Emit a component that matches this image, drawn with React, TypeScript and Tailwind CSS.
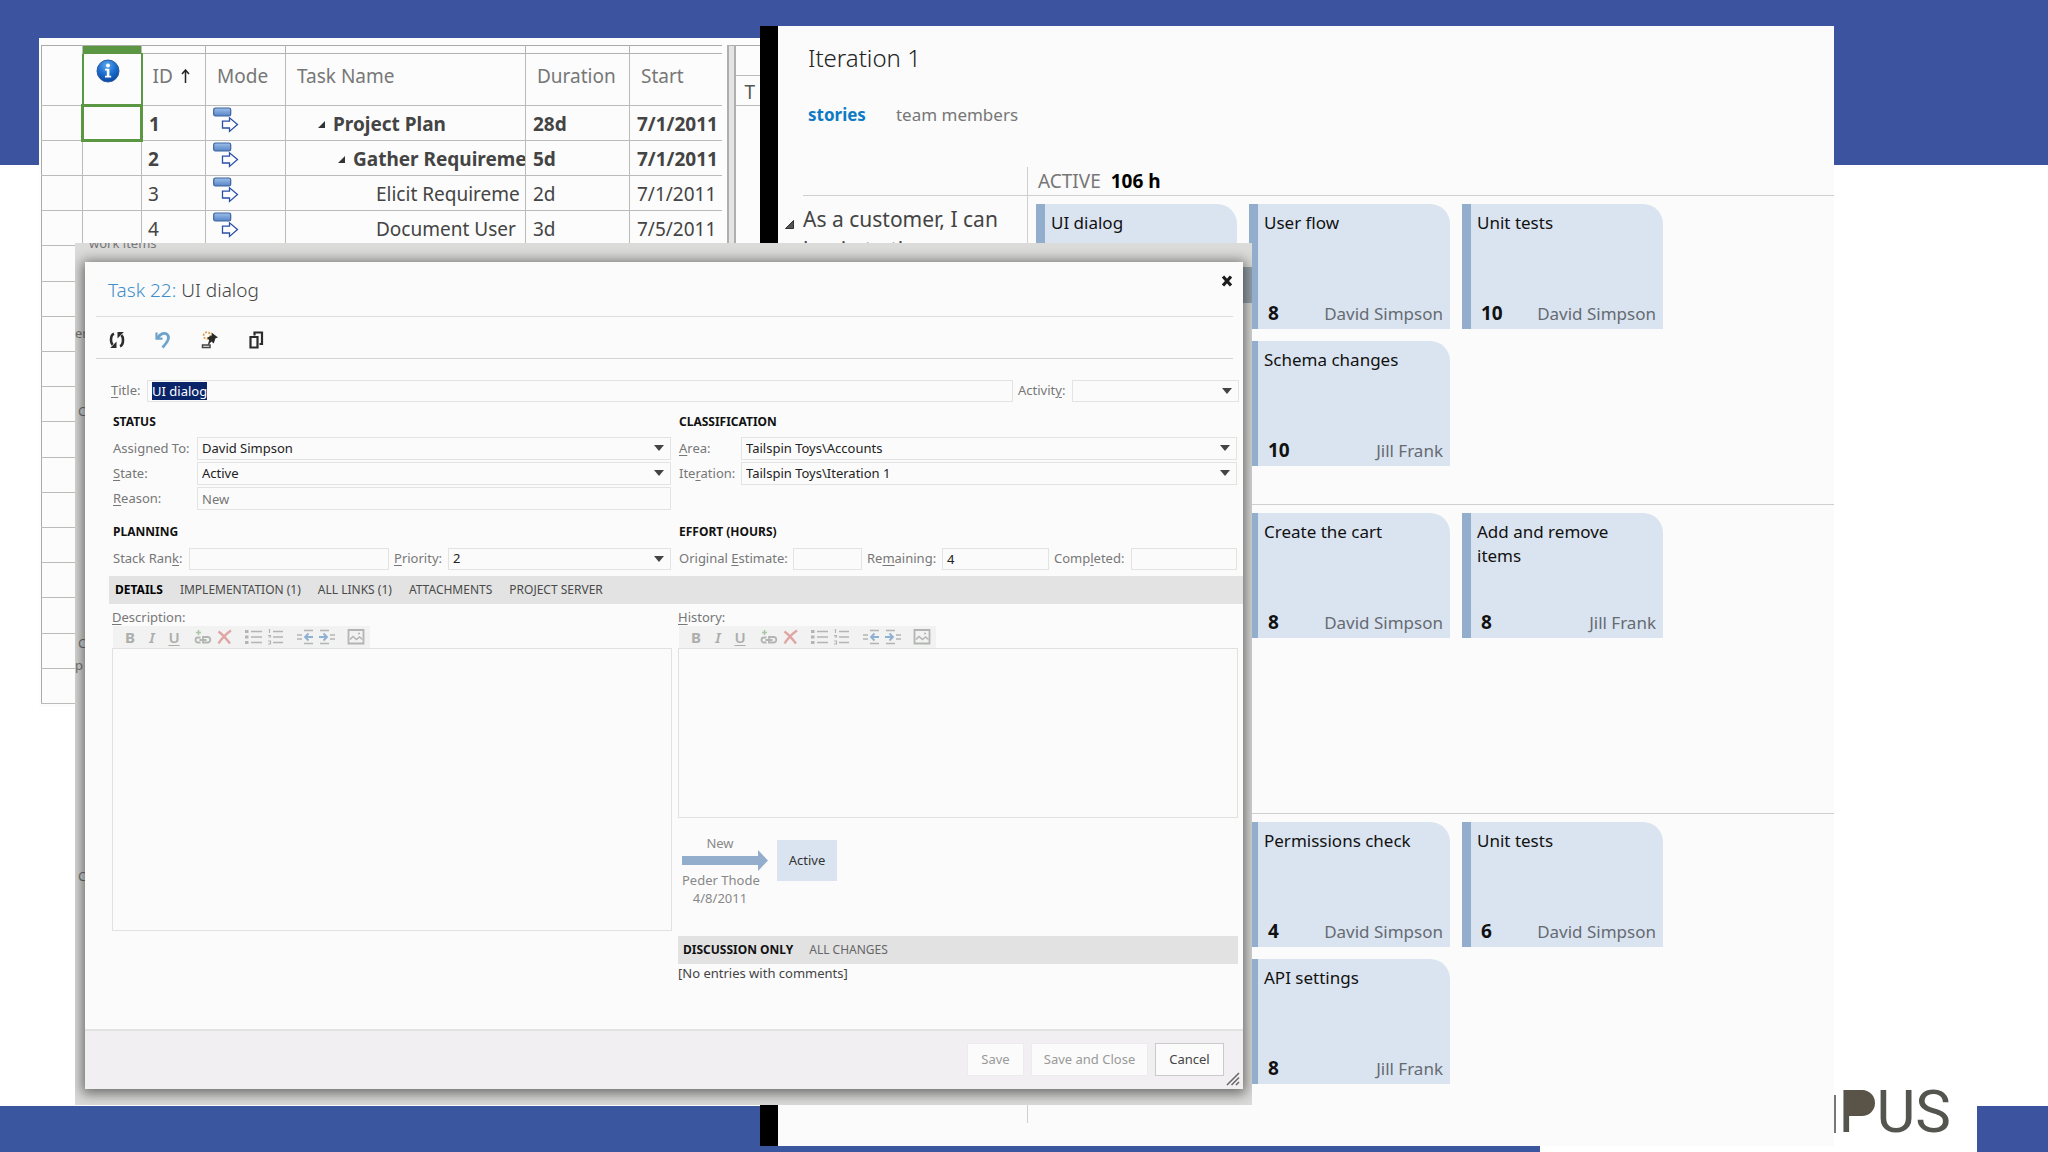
import React, { useEffect, useId, useRef } from "react";

type LabelParts = [string, string, string];

const planRows = [
  { id: "1", name: "Project Plan", duration: "28d", start: "7/1/2011", level: 0 },
  { id: "2", name: "Gather Requireme", duration: "5d", start: "7/1/2011", level: 1 },
  { id: "3", name: "Elicit Requireme", duration: "2d", start: "7/1/2011", level: 2 },
  { id: "4", name: "Document User", duration: "3d", start: "7/5/2011", level: 2 },
];
const blankRows = Array.from({ length: 13 }, (_, i) => i);
const indents = ["pl-6", "pl-11", "pl-[90px]"];

function InfoIcon() {
  return (
    <svg width="24" height="24" viewBox="0 0 24 24" className="ml-3" role="img" aria-label="Indicators">
      <defs>
        <radialGradient id="info-fill" cx="0.45" cy="0.25" r="0.8">
          <stop offset="0" stopColor="#5fa8ec" />
          <stop offset="0.5" stopColor="#1c6fd0" />
          <stop offset="1" stopColor="#0a4296" />
        </radialGradient>
      </defs>
      <circle cx="12" cy="12" r="11" fill="url(#info-fill)" stroke="#2c5fa5" strokeWidth="1" />
      <circle cx="12" cy="6.4" r="2" fill="#fff" />
      <path d="M9 9.8h4.4v7h1.8v1.7H9v-1.7h1.8v-5.3H9z" fill="#fff" />
    </svg>
  );
}

function ModeIcon() {
  return (
    <svg width="26" height="27" viewBox="0 0 26 27" aria-hidden="true">
      <defs>
        <linearGradient id="mode-fill" x1="0" y1="0" x2="0" y2="1">
          <stop offset="0" stopColor="#9fc0ea" />
          <stop offset="1" stopColor="#5584c6" />
        </linearGradient>
      </defs>
      <rect x="0.7" y="1" width="17" height="8" rx="1.8" fill="url(#mode-fill)" stroke="#3f62a0" strokeWidth="1.2" />
      <path d="M9.5 14.2h7v-3.4l8 6.8-8 6.8V21h-7z" fill="#fff" stroke="#2a4fa8" strokeWidth="1.3" />
    </svg>
  );
}

function OutlineArrow() {
  return (
    <svg width="7" height="7" viewBox="0 0 7 7" aria-hidden="true">
      <path d="M7 0v7H0z" fill="#333" />
    </svg>
  );
}

function ProjectWindow() {
  return (
    <section className="absolute top-[38px] left-[39px] flex h-[669px] w-[721px] overflow-hidden bg-[#fbfcfb] pt-[7px] pl-[2px]">
      <table className="w-[680px] shrink-0 table-fixed border-collapse self-start border-t border-l border-[#a9aba9] text-[19px] text-[#444]">
        <colgroup>
          <col className="w-[41px]" />
          <col className="w-[59px]" />
          <col className="w-[64px]" />
          <col className="w-[80px]" />
          <col className="w-[240px]" />
          <col className="w-[104px]" />
          <col className="w-[92px]" />
        </colgroup>
        <thead>
          <tr className="h-[8px]">
            <td className="border-r border-[#b9bcb9]" />
            <td className="border-r border-[#b9bcb9] bg-[#5b9743]" />
            {[0, 1, 2, 3].map((n) => (
              <td key={n} className="border-r border-b border-[#b0b3b0]" />
            ))}
            <td className="border-b border-[#b0b3b0]" />
          </tr>
          <tr className="h-[52px] text-left leading-7 text-[#777]">
            <th className="border-r border-b border-[#b9bcb9]" />
            <th className="border-r-2 border-b border-l-2 border-[#5b9743] pb-4">
              <InfoIcon />
            </th>
            <th className="border-r border-b border-[#b9bcb9] pb-2 pl-[10px] font-normal">
              <span className="flex items-center gap-2">
                ID
                <svg width="9" height="14" viewBox="0 0 9 14" aria-hidden="true">
                  <path d="M4.500 14V1.500M1 5l3.500-4L8 5" fill="none" stroke="#222" strokeWidth="1.500" />
                </svg>
              </span>
            </th>
            <th className="border-r border-b border-[#b9bcb9] pb-2 pl-[11px] font-normal">Mode</th>
            <th className="border-r border-b border-[#b9bcb9] pb-2 pl-[11px] font-normal">Task Name</th>
            <th className="border-r border-b border-[#b9bcb9] pb-2 pl-[11px] font-normal">Duration</th>
            <th className="border-b border-[#b9bcb9] pb-2 pl-[11px] font-normal">Start</th>
          </tr>
        </thead>
        <tbody>
          {planRows.map((row, i) => (
            <tr key={row.id} className={row.level < 2 ? "h-[35px] leading-7 font-bold" : "h-[35px] leading-7"}>
              <td className="border-r border-b border-[#b9bcb9]" />
              <td className={i === 0 ? "border-3 border-[#5b9743]" : "border-r border-b border-[#b9bcb9]"} />
              <td className="border-r border-b border-[#b9bcb9] pt-[2px] pl-[6px]">{row.id}</td>
              <td className="border-r border-b border-[#b9bcb9] pb-[5px] pl-[7px]">
                <ModeIcon />
              </td>
              <td className="overflow-hidden border-r border-b border-[#b9bcb9] pt-[2px] whitespace-nowrap">
                <span className={`flex items-center gap-2 leading-7 ${indents[row.level]}`}>
                  {row.level < 2 && (
                    <span className="ml-2">
                      <OutlineArrow />
                    </span>
                  )}
                  {row.name}
                </span>
              </td>
              <td className="border-r border-b border-[#b9bcb9] pt-[2px] pl-[7px]">{row.duration}</td>
              <td className="border-b border-[#b9bcb9] pt-[2px] pl-[7px] whitespace-nowrap">{row.start}</td>
            </tr>
          ))}
          {blankRows.map((n) => (
            <tr key={n} className={n % 5 === 0 ? "h-9" : "h-[35px]"}>
              <td className="border-r border-b border-[#b9bcb9]" />
              <td className="border-b border-[#b9bcb9]" colSpan={6} />
            </tr>
          ))}
        </tbody>
      </table>
      <div className="ml-[5px] w-[9px] shrink-0 border-x-2 border-t border-[#aeb0ae] bg-[#e3e4e3]" />
      <div className="grow border-t border-[#a9aba9]">
        <div className="h-[30px] border-b border-[#b9bcb9]" />
        <div className="flex h-[30px] items-center border-b border-[#b9bcb9] pt-[3px] pl-[9px] text-[19px] text-[#555]">T</div>
      </div>
    </section>
  );
}

interface Card {
  title: string;
  hours: number;
  owner: string;
  place: string;
}

const stories: { text: string; cards: Card[] }[] = [
  {
    text: "As a customer, I can begin to the",
    cards: [
      { title: "UI dialog", hours: 4, owner: "David Simpson", place: "col-start-1 row-start-1" },
      { title: "User flow", hours: 8, owner: "David Simpson", place: "col-start-2 row-start-1" },
      { title: "Unit tests", hours: 10, owner: "David Simpson", place: "col-start-3 row-start-1" },
      { title: "Schema changes", hours: 10, owner: "Jill Frank", place: "col-start-2 row-start-2" },
    ],
  },
  {
    text: "",
    cards: [
      { title: "Create the cart", hours: 8, owner: "David Simpson", place: "col-start-2 row-start-1" },
      { title: "Add and remove items", hours: 8, owner: "Jill Frank", place: "col-start-3 row-start-1" },
    ],
  },
  {
    text: "",
    cards: [
      { title: "Permissions check", hours: 4, owner: "David Simpson", place: "col-start-2 row-start-1" },
      { title: "Unit tests", hours: 6, owner: "David Simpson", place: "col-start-3 row-start-1" },
      { title: "API settings", hours: 8, owner: "Jill Frank", place: "col-start-2 row-start-2" },
    ],
  },
];

function TaskCard({ card }: { card: Card }) {
  return (
    <article
      className={`flex h-[125px] flex-col justify-between rounded-tr-[20px] border-l-9 border-[#93aecd] bg-[#dae4f0] pt-[7px] pr-[7px] pb-[3px] pl-[6px] text-[17px] leading-6 text-[#111] ${card.place}`}
    >
      <h3 className="max-w-[150px]">{card.title}</h3>
      <div className="flex items-baseline justify-between pl-1">
        <strong className="text-[19px] leading-6">{card.hours}</strong>
        <span className="text-[#666b72]">{card.owner}</span>
      </div>
    </article>
  );
}

function IterationWindow() {
  return (
    <section className="absolute top-[26px] right-[214px] bottom-[6px] left-[760px] flex flex-col border-l-18 border-black bg-[#fafbfa]">
      <h1 className="mt-4 ml-[30px] text-2xl leading-8 font-light text-[#222]">Iteration 1</h1>
      <nav className="mt-[29px] ml-[30px] flex h-[25px] gap-[30px] text-[17px] leading-6">
        <a href="#stories" className="font-bold text-[#0e7ac6]">stories</a>
        <a href="#members" className="text-[#777]">team members</a>
      </nav>
      <div className="mt-[39px] flex h-[29px] pl-[25px]">
        <div className="w-[225px] border-r border-b border-[#cfcfcf]" />
        <div className="flex grow items-baseline gap-[10px] border-b border-[#cfcfcf] pl-[10px] text-[19px] leading-7 text-[#777]">
          ACTIVE <strong className="text-black">106 h</strong>
        </div>
      </div>
      {stories.map((story, i) => (
        <div key={i} className="flex h-[309px] pl-[7px]">
          <div className="flex w-[18px] items-start pt-[24px]">
            {story.text && (
              <svg width="9" height="9" viewBox="0 0 10 10" aria-hidden="true">
                <path d="M9.500.5v9H.5z" fill="#555" stroke="#222" />
              </svg>
            )}
          </div>
          <div className={`w-[225px] border-r border-[#cfcfcf] pt-2 pr-3 text-[21px] leading-[30px] text-[#444] ${i < 2 ? "border-b" : ""}`}>
            {story.text}
          </div>
          <div
            className={`grid grow auto-rows-min grid-cols-[repeat(auto-fill,201px)] gap-3 border-[#cfcfcf] pt-2 pl-2 ${i < 2 ? "border-b" : ""}`}
          >
            {story.cards.map((card) => (
              <TaskCard key={card.title} card={card} />
            ))}
          </div>
        </div>
      ))}
    </section>
  );
}

function AccessLabel({ parts, htmlFor, className = "" }: { parts: LabelParts; htmlFor?: string; className?: string }) {
  return (
    <label htmlFor={htmlFor} className={`shrink-0 whitespace-nowrap text-[#777] ${className}`}>
      {parts[0]}
      <span className="underline underline-offset-2">{parts[1]}</span>
      {parts[2]}
    </label>
  );
}

const boxClass = "h-full w-full border border-[#e2e4e2] bg-[#fbfbfb] px-1 text-[13px] outline-none";

interface FieldProps {
  parts: LabelParts;
  value?: string;
  labelClass?: string;
  boxWrap?: string;
  muted?: boolean;
}

function TextField({ parts, value = "", labelClass, boxWrap = "flex-1", muted }: FieldProps) {
  const id = useId();
  return (
    <>
      <AccessLabel parts={parts} htmlFor={id} className={labelClass} />
      <div className={`h-full min-w-0 ${boxWrap}`}>
        <input id={id} type="text" defaultValue={value} className={`${boxClass} ${muted ? "text-[#777]" : "text-[#222]"}`} />
      </div>
    </>
  );
}

function SelectField({ parts, value = "", labelClass, boxWrap = "flex-1" }: FieldProps) {
  const id = useId();
  return (
    <>
      <AccessLabel parts={parts} htmlFor={id} className={labelClass} />
      <div className={`relative h-full min-w-0 ${boxWrap}`}>
        <select id={id} defaultValue={value} className={`${boxClass} appearance-none text-[#222]`}>
          <option>{value}</option>
        </select>
        <svg width="10" height="6" viewBox="0 0 10 6" className="pointer-events-none absolute top-2 right-[7px]" aria-hidden="true">
          <path d="M0 0h10L5 6z" fill="#444" />
        </svg>
      </div>
    </>
  );
}

function RefreshIcon() {
  return (
    <svg width="16" height="18" viewBox="0 0 16 18" aria-hidden="true">
      <g fill="none" stroke="#2b2b2b" strokeWidth="2.600">
        <path d="M5 2.800C3 3.500 2 5.500 2 9c0 2.200.6 3.800 1.600 4.800" />
        <path d="M11 15.200c2-.7 3-2.700 3-6.200 0-2.200-.6-3.800-1.600-4.800" />
      </g>
      <path d="M7.500 10.500v6.500H1.200z M8.500 7.500V1h6.300z" fill="#2b2b2b" />
    </svg>
  );
}

function UndoIcon() {
  return (
    <svg width="16" height="18" viewBox="0 0 16 18" aria-hidden="true">
      <path d="M2.500 7C5.500 2.500 9.500 1.200 12 3.300c3.200 2.800 1.200 7-4.500 13.200" fill="none" stroke="#6da3cc" strokeWidth="2.800" />
      <path d="M1.500 1.500v6.200h6" fill="none" stroke="#6da3cc" strokeWidth="2.200" />
    </svg>
  );
}

function PinIcon() {
  return (
    <svg width="18" height="18" viewBox="0 0 18 18" aria-hidden="true">
      <circle cx="6" cy="4.500" r="3.400" fill="none" stroke="#e0a04a" strokeWidth="1.800" strokeDasharray="2 1.400" />
      <path d="M10.500 1.500l6.500 5-2.500.8-1.800 5.200-2.300-1.900-3.900 4.400 1.700-5.900-2.200-2.400 4.700-2.200z" fill="#2b2b2b" />
      <path d="M1.500 16.500v-2.500h7.500v2.500z" fill="none" stroke="#444" strokeWidth="1.500" />
    </svg>
  );
}

function CopyIcon() {
  return (
    <svg width="16" height="18" viewBox="0 0 16 18" aria-hidden="true">
      <g fill="none" stroke="#2b2b2b" strokeWidth="2.200">
        <path d="M1.500 6h7v10.500h-7z" />
        <path d="M5.500 4.500v-3H13v11.500h-2.500" />
      </g>
    </svg>
  );
}

function EditorIcon({ children }: { children: React.ReactNode }) {
  return (
    <svg width="18" height="16" viewBox="0 0 18 16" fill="none" stroke="#b3b5b3" strokeWidth="1.500" aria-hidden="true">
      {children}
    </svg>
  );
}

const editorGroups: { name: string; icon: React.ReactNode }[][] = [
  [
    { name: "Bold", icon: <b>B</b> },
    { name: "Italic", icon: <i className="font-semibold">I</i> },
    { name: "Underline", icon: <span className="font-semibold underline underline-offset-2">U</span> },
  ],
  [
    {
      name: "Insert link",
      icon: (
        <EditorIcon>
          <path d="M4.500 1v5M2 3.500h5" stroke="#a9c7a4" />
          <path d="M6.500 13.500H4a2.300 2.300 0 0 1 0-5h2.500M9 8h5a2.800 2.800 0 0 1 0 5.500H9zM5.500 11h7" strokeWidth="1.800" />
        </EditorIcon>
      ),
    },
    {
      name: "Remove link",
      icon: (
        <EditorIcon>
          <path d="M2.500 2.500c4 3 8 7.500 11.500 12M15 1.500C10.500 4.500 6 9 2.500 14.500" stroke="#dfa5a3" strokeWidth="2.300" />
        </EditorIcon>
      ),
    },
  ],
  [
    {
      name: "Bulleted list",
      icon: (
        <EditorIcon>
          <path d="M0 2.500h3.500M0 8h3.500M0 13.500h3.500" strokeWidth="3" />
          <path d="M6 2.500h11M6 8h11M6 13.500h11" />
        </EditorIcon>
      ),
    },
    {
      name: "Numbered list",
      icon: (
        <EditorIcon>
          <path d="M2.500 0v4M1 6.500h2.500v1.500H1.500M1 12h2.500v3H1" strokeWidth="1.200" />
          <path d="M6 2.500h10M6 8h10M6 13.500h10" />
        </EditorIcon>
      ),
    },
  ],
  [
    {
      name: "Outdent",
      icon: (
        <EditorIcon>
          <path d="M8 1.500h9M8 14.500h9M1 6h5M1 10h5" />
          <path d="M17 8H9M12.500 4.500L9 8l3.500 3.500" stroke="#8eb0d2" strokeWidth="1.800" />
        </EditorIcon>
      ),
    },
    {
      name: "Indent",
      icon: (
        <EditorIcon>
          <path d="M2 1.500h9M2 14.500h9M12 6h5M12 10h5" />
          <path d="M1 8h8M5.500 4.500L9 8l-3.500 3.500" stroke="#8eb0d2" strokeWidth="1.800" />
        </EditorIcon>
      ),
    },
  ],
  [
    {
      name: "Insert image",
      icon: (
        <EditorIcon>
          <path d="M1.500 1h15v13.500h-15z" strokeWidth="1.800" />
          <path d="M3 10.500l3-3 3.500 3 3-2.500 3 2.500" />
          <path d="M11 4.500h2" />
        </EditorIcon>
      ),
    },
  ],
];

function RichEditor({ parts, height }: { parts: LabelParts; height: string }) {
  const id = useId();
  return (
    <div className="flex flex-col">
      <AccessLabel parts={parts} htmlFor={id} className="h-[22px] pt-[3px] leading-5" />
      <div className="ml-px flex h-[22px] w-[257px] items-center gap-[7px] bg-[#f1f2f1] pl-[6px] text-[#acaeac]">
        {editorGroups.map((group, i) => (
          <div key={i} className="flex">
            {group.map((tool) => (
              <button key={tool.name} type="button" aria-label={tool.name} className="flex h-[22px] w-[22px] items-center justify-center text-[15px]">
                {tool.icon}
              </button>
            ))}
          </div>
        ))}
      </div>
      <textarea id={id} className={`w-full resize-none border border-[#e0e2e0] bg-[#fbfbfb] outline-none ${height}`} />
    </div>
  );
}

const tabs = ["DETAILS", "IMPLEMENTATION (1)", "ALL LINKS (1)", "ATTACHMENTS", "PROJECT SERVER"];
const headingClass = "text-xs leading-5 font-bold text-[#111]";

function TaskDialog() {
  const titleRef = useRef<HTMLInputElement>(null);
  const titleId = useId();
  useEffect(() => {
    titleRef.current?.focus();
    titleRef.current?.select();
  }, []);
  return (
    <div role="dialog" aria-label="Task 22: UI dialog" className="relative flex grow flex-col bg-[#fbfbfb] text-[13px] shadow-[0_2px_12px_3px_rgba(0,0,0,0.5)]">
      <header className="mr-[10px] ml-[11px] flex h-[55px] justify-between border-b border-[#dcdedc] pl-3">
        <h2 className="pt-[14px] text-[19px] leading-7 font-light text-[#444]">
          <span className="text-[#3d8ecb]">Task 22:</span> UI dialog
        </h2>
        <button type="button" aria-label="Close" className="h-8 w-3 pt-[6px]">
          <svg width="12" height="12" viewBox="0 0 12 12" aria-hidden="true">
            <path d="M2 1.500l8 9M10 1.500l-8 9" stroke="#1c1c1c" strokeWidth="3.200" />
          </svg>
        </button>
      </header>
      <div className="mr-[10px] ml-[11px] flex h-[42px] items-center gap-[30px] border-b border-[#d3d5d3] pt-1 pl-[13px]">
        <button type="button" aria-label="Refresh"><RefreshIcon /></button>
        <button type="button" aria-label="Undo"><UndoIcon /></button>
        <button type="button" aria-label="Pin"><PinIcon /></button>
        <button type="button" aria-label="Copy"><CopyIcon /></button>
      </div>

      <form className="flex grow flex-col" onSubmit={(e) => e.preventDefault()}>
        <div className="mt-[21px] flex h-[22px] items-center pr-1 pl-[26px]">
          <AccessLabel parts={["", "T", "itle:"]} htmlFor={titleId} className="w-9" />
          <input
            id={titleId}
            ref={titleRef}
            type="text"
            defaultValue="UI dialog"
            className={`${boxClass} min-w-0 flex-1 selection:bg-[#0a246a] selection:text-white`}
          />
          <SelectField parts={["Activit", "y", ":"]} labelClass="ml-[5px] w-[54px]" boxWrap="w-[167px]" />
        </div>

        <div className="grid grid-cols-2 gap-[6px] pr-[5px] pl-[27px]">
          <fieldset className="px-px">
            <h3 className={`${headingClass} mt-[10px] mb-[5px]`}>STATUS</h3>
            <div className="flex flex-col gap-[2px]">
              <div className="flex h-[23px] items-center">
                <SelectField parts={["Assi", "g", "ned To:"]} value="David Simpson" labelClass="w-[84px]" />
              </div>
              <div className="flex h-[23px] items-center">
                <SelectField parts={["", "S", "tate:"]} value="Active" labelClass="w-[84px]" />
              </div>
              <div className="flex h-[23px] items-center">
                <TextField parts={["", "R", "eason:"]} value="New" labelClass="w-[84px]" muted />
              </div>
            </div>
            <h3 className={`${headingClass} mt-3 mb-[6px]`}>PLANNING</h3>
            <div className="flex h-[22px] items-center">
              <TextField parts={["Stack Ran", "k", ":"]} labelClass="w-[76px]" boxWrap="flex-[200]" />
              <SelectField parts={["", "P", "riority:"]} value="2" labelClass="ml-[5px] w-[54px]" boxWrap="flex-[223]" />
            </div>
          </fieldset>
          <fieldset className="px-px">
            <h3 className={`${headingClass} mt-[10px] mb-[5px]`}>CLASSIFICATION</h3>
            <div className="flex flex-col gap-[2px]">
              <div className="flex h-[23px] items-center">
                <SelectField parts={["", "A", "rea:"]} value="Tailspin Toys\Accounts" labelClass="w-[62px]" />
              </div>
              <div className="flex h-[23px] items-center">
                <SelectField parts={["Ite", "r", "ation:"]} value="Tailspin Toys\Iteration 1" labelClass="w-[62px]" />
              </div>
              <div className="h-[23px]" />
            </div>
            <h3 className={`${headingClass} mt-3 mb-[6px]`}>EFFORT (HOURS)</h3>
            <div className="flex h-[22px] items-center">
              <TextField parts={["Original ", "E", "stimate:"]} labelClass="w-[114px]" boxWrap="flex-[69]" />
              <TextField parts={["Re", "m", "aining:"]} value="4" labelClass="ml-[5px] w-[75px]" boxWrap="flex-[107]" />
              <TextField parts={["Comp", "l", "eted:"]} labelClass="ml-[5px] w-[77px]" boxWrap="flex-[106]" />
            </div>
          </fieldset>
        </div>

        <div role="tablist" className="mt-[6px] ml-6 flex h-7 items-center gap-[17px] bg-[#e2e3e2] pl-[6px] text-xs text-[#4a4a4a]">
          {tabs.map((tab, i) => (
            <button key={tab} type="button" role="tab" aria-selected={i === 0} className={i === 0 ? "font-bold text-black" : ""}>
              {tab}
            </button>
          ))}
        </div>

        <div className="grid grid-cols-2 gap-[6px] pr-[5px] pl-[27px]">
          <RichEditor parts={["", "D", "escription:"]} height="h-[283px]" />
          <div>
            <RichEditor parts={["", "H", "istory:"]} height="h-[170px]" />
            <div className="mt-[22px] flex h-[96px] items-start gap-[9px] pl-1">
              <div className="-mt-[6px] flex w-[86px] flex-col leading-[18px] text-[#888]">
                <span className="w-[76px] text-center">New</span>
                <svg width="86" height="21" viewBox="0 0 86 21" className="-mt-[2px]" aria-hidden="true">
                  <path d="M0 6h76V0l10 10.500L76 21v-6H0z" fill="#93aecd" />
                </svg>
                <span className="w-[76px] text-center whitespace-nowrap">Peder Thode</span>
                <span className="w-[76px] text-center">4/8/2011</span>
              </div>
              <div className="flex h-[41px] w-[60px] items-center justify-center bg-[#dae4f0] pt-px text-[#333]">Active</div>
            </div>
            <div role="tablist" className="flex h-7 items-center gap-4 bg-[#e2e2e2] pl-[5px] text-xs text-[#666]">
              <button type="button" role="tab" aria-selected="true" className="font-bold text-[#111]">DISCUSSION ONLY</button>
              <button type="button" role="tab" aria-selected="false">ALL CHANGES</button>
            </div>
            <p className="leading-[18px] text-[#444]">[No entries with comments]</p>
          </div>
        </div>

        <footer className="relative mt-auto flex h-[60px] items-start justify-end gap-[7px] border-t-2 border-[#e2e2e2] bg-[#f1eff1] pt-3 pr-[19px]">
          <button type="button" disabled className="h-[33px] w-[57px] border border-[#ececec] bg-[#fbfbfb] text-[#999]">Save</button>
          <button type="button" disabled className="h-[33px] w-[117px] border border-[#ececec] bg-[#fbfbfb] text-[#999]">Save and Close</button>
          <button type="button" className="h-[33px] w-[69px] border border-[#c9cbc9] bg-[#fbfbfb] text-[#444]">Cancel</button>
          <svg width="14" height="14" viewBox="0 0 14 14" className="absolute right-[3px] bottom-[3px]" aria-hidden="true">
            <path d="M1 13L13 1M5.500 13L13 5.500M10 13l3-3" stroke="#666" strokeWidth="1.500" />
          </svg>
        </footer>
      </form>
    </div>
  );
}

const backdropText = [
  { text: "work items", place: "-top-[10px] left-[14px]" },
  { text: "er", place: "top-[80px] left-0" },
  { text: "C", place: "top-[158px] left-[3px]" },
  { text: "C", place: "top-[390px] left-[3px]" },
  { text: "p", place: "top-[412px] left-0" },
  { text: "C", place: "top-[623px] left-[3px]" },
];

export default function App() {
  return (
    <div className="relative flex min-h-screen flex-col bg-white font-['Noto_Sans',sans-serif]">
      <div className="absolute inset-x-0 top-0 h-[165px] bg-[#3c539f]" />
      <div className="absolute inset-x-0 bottom-0 flex h-[46px]">
        <div className="grow bg-[#39569e]" />
        <div className="w-[437px]" />
        <div className="w-[71px] bg-[#3c539f]" />
      </div>
      <div className="absolute right-[97px] bottom-[10px] flex text-[60px] leading-[60px] text-[#555550]">
        <span className="font-['Roboto',sans-serif]">PUS</span>
        <svg width="30" height="26" viewBox="0 0 30 26" className="absolute top-2 left-[6px]" aria-hidden="true">
          <path d="M0 0h17a13 13 0 0 1 0 26H0z" fill="#5a5448" />
        </svg>
      </div>
      <div className="absolute right-[212px] bottom-[19px] h-[38px] w-[2px] bg-[#777]" />

      <ProjectWindow />
      <IterationWindow />

      <main className="relative mt-[243px] mr-[796px] mb-[47px] ml-[75px] flex grow flex-col overflow-hidden bg-[#dcdcdb] pt-[19px] pr-[9px] pb-4 pl-[10px]">
        {backdropText.map((item) => (
          <span key={item.place} className={`absolute text-[13px] leading-5 text-[#777] ${item.place}`}>
            {item.text}
          </span>
        ))}
        <div className="absolute top-6 right-0 h-9 w-[9px] bg-[#98a5ad]" />
        <TaskDialog />
      </main>
    </div>
  );
}
